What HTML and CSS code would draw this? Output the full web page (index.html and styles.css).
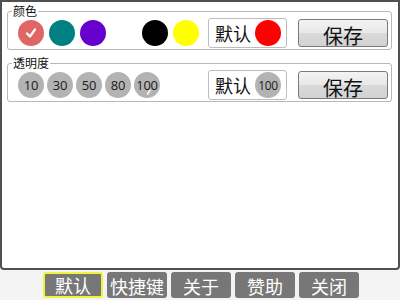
FILE: index.html
```html
<!DOCTYPE html>
<html>
<head>
<meta charset="utf-8">
<link rel="stylesheet" href="styles.css">
</head>
<body>
<div class="window">
  <fieldset class="group">
    <legend>颜色</legend>
    <div class="row">
      <div class="swatches">
        <span class="dot c-red"><svg viewBox="0 0 26 26" width="26" height="26"><path d="M9 13.5 L12 16.5 L17 9.5" fill="none" stroke="#fff" stroke-width="2.2" stroke-linecap="round" stroke-linejoin="round"/></svg></span>
        <span class="dot c-teal"></span>
        <span class="dot c-purple"></span>
        <span class="dot c-empty"></span>
        <span class="dot c-black"></span>
        <span class="dot c-yellow"></span>
      </div>
      <div class="actions">
        <div class="default-box">默认<span class="dot c-pure"></span></div>
        <button class="save">保存</button>
      </div>
    </div>
  </fieldset>
  <fieldset class="group second">
    <legend>透明度</legend>
    <div class="row">
      <div class="swatches alpha">
        <span class="dot grey">10</span>
        <span class="dot grey">30</span>
        <span class="dot grey">50</span>
        <span class="dot grey">80</span>
        <span class="dot grey">100<svg class="tick" viewBox="0 0 26 26" width="26" height="26"><path d="M13.5 22 L16 18.5" stroke="#fff" stroke-width="1.6" stroke-linecap="round"/></svg></span>
      </div>
      <div class="actions">
        <div class="default-box">默认<span class="dot grey small">100</span></div>
        <button class="save">保存</button>
      </div>
    </div>
  </fieldset>
</div>
<div class="bar">
  <button class="tab active">默认</button>
  <button class="tab">快捷键</button>
  <button class="tab">关于</button>
  <button class="tab">赞助</button>
  <button class="tab">关闭</button>
</div>
</body>
</html>
```
FILE: styles.css
```css
html, body {
  margin: 0;
  padding: 0;
}
body {
  width: 400px;
  height: 300px;
  background: #f4f4f4;
  font-family: "Noto Sans CJK SC", "Noto Sans", sans-serif;
  overflow: hidden;
}
.window {
  box-sizing: border-box;
  height: 270px;
  border: 2px solid #505050;
  border-radius: 0 0 4px 4px;
  background: #fff;
  padding: 3px 6px 0 5px;
}
.group {
  margin: 0;
  padding: 1px 3px 1px 10px;
  border: 1px solid #b8b8b8;
  border-radius: 3px;
  min-inline-size: 0;
}
.group.second {
  margin-top: 7px;
}
.group legend {
  font-size: 12px;
  line-height: 12px;
  padding: 0 1px;
  margin-left: -6px;
  color: #111;
}
.row {
  display: flex;
  align-items: center;
  height: 30px;
}
.swatches {
  display: flex;
  gap: 5px;
}
.swatches.alpha {
  gap: 3px;
}
.dot {
  position: relative;
  width: 26px;
  height: 26px;
  border-radius: 50%;
  display: flex;
  align-items: center;
  justify-content: center;
  flex: none;
}
.dot svg {
  display: block;
}
.dot .tick {
  position: absolute;
  left: 0;
  top: 0;
}
.c-red { background: #e06666; }
.c-teal { background: #008080; }
.c-purple { background: #6600cc; }
.c-empty { background: transparent; }
.c-black { background: #000; }
.c-yellow { background: #ffff00; }
.c-pure { background: #ff0000; }
.grey {
  background: #b3b3b3;
  color: #1a1a1a;
  font-family: "Open Sans", "Noto Sans", sans-serif;
  font-size: 13px;
  letter-spacing: -0.3px;
}
.grey.small {
  font-size: 12px;
}
.actions {
  margin-left: auto;
  display: flex;
  align-items: center;
  gap: 11px;
}
.default-box {
  box-sizing: border-box;
  width: 79px;
  height: 30px;
  border: 1px solid #bdbdbd;
  border-radius: 3px;
  display: flex;
  align-items: center;
  gap: 4px;
  padding-left: 6px;
  font-size: 18px;
  color: #111;
}
.save {
  box-sizing: border-box;
  width: 90px;
  height: 28px;
  border: 1px solid #7a7a7a;
  border-radius: 3px;
  background: linear-gradient(#f3f3f3, #e8e8e8 50%, #dadada 51%, #d2d2d2);
  font-family: "Noto Sans CJK SC", sans-serif;
  font-size: 20px;
  line-height: 20px;
  padding: 5px 0 0;
  color: #111;
}
.bar {
  display: flex;
  justify-content: center;
  gap: 4px;
  padding: 2px 0 0 2px;
}
.tab {
  box-sizing: border-box;
  width: 60px;
  height: 26px;
  border: none;
  border-radius: 3px;
  background: #777;
  color: #fff;
  font-family: "Noto Sans CJK SC", sans-serif;
  font-size: 18px;
  line-height: 20px;
  padding: 2px 0 0;
}
.tab.active {
  border: 2px solid #f2f23a;
  padding-top: 0;
}
```
